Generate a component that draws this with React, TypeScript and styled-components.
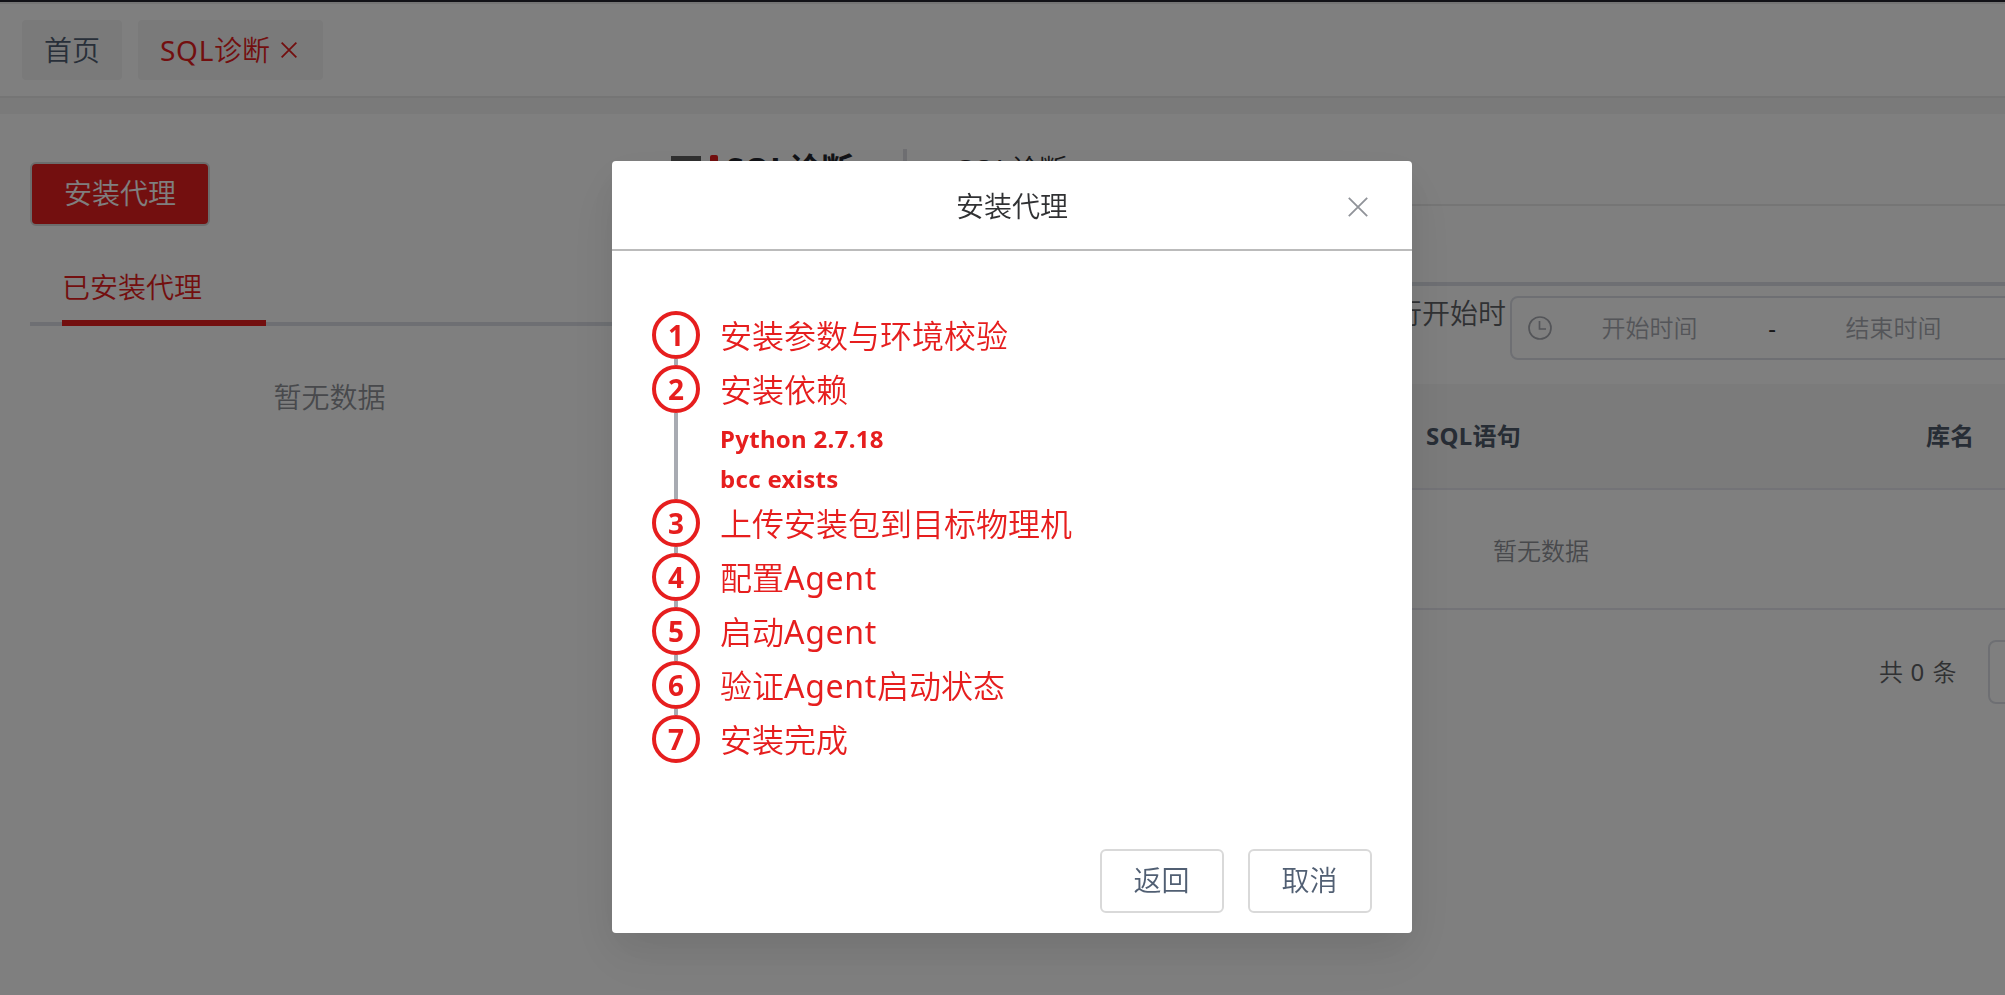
import React from "react";
import styled, { createGlobalStyle, css } from "styled-components";

const red = "#e61e1e";

const GlobalStyle = createGlobalStyle`
  * { box-sizing: border-box; }
  html, body { margin: 0; height: 100%; overflow: hidden; background: #fff; }
  body {
    font-family: "Noto Sans", "Noto Sans CJK SC", sans-serif;
    font-size: 28px;
    line-height: 40px;
    color: #606266;
    font-weight: 350;
  }
  button { font: inherit; }
`;

const Latin = styled.span`
  font-weight: 400;
  letter-spacing: 0.7px;
`;

const Page = styled.div`
  width: 100%;
  height: 995px;
  overflow: hidden;
  display: flex;
  flex-direction: column;
`;

const TopEdge = styled.div`
  height: 4px;
  flex: none;
  background: #ebebeb;
  border-top: 2px solid #24242e;
`;

const TabBar = styled.nav`
  height: 94px;
  flex: none;
  display: flex;
  gap: 16px;
  padding: 16px 22px;
  border-bottom: 2px solid #ebebeb;
`;

const PageTab = styled.div<{ $active?: boolean }>`
  height: 60px;
  display: flex;
  align-items: center;
  gap: 12px;
  padding: 0 23px 0 22px;
  border-radius: 4px;
  background: #f4f4f4;
  color: ${(p) => (p.$active ? red : "#515f73")};
  white-space: nowrap;
  ${(p) => p.$active && css`width: 185px;`}
`;

const TabLabel = styled.span<{ $width: number }>`
  width: ${(p) => p.$width}px;
`;

const Gap = styled.div`
  height: 16px;
  flex: none;
  background: #f4f4f4;
`;

const Main = styled.main`
  flex: 1;
  display: flex;
  min-height: 0;
`;

const AgentPanel = styled.aside`
  width: 600px;
  flex: none;
  margin-left: 30px;
  padding-top: 48px;
`;

const PrimaryButton = styled.button`
  display: block;
  width: 180px;
  height: 64px;
  padding: 0 0 2px 0;
  border: 2px solid #d8d8d8;
  border-radius: 6px;
  background: ${red};
  color: #fff;
`;

const PanelTabs = styled.div`
  height: 82px;
  margin-top: 18px;
  padding: 22px 32px 0;
  border-bottom: 4px solid #dcdfe6;
`;

const PanelTab = styled.div`
  position: relative;
  width: 204px;
  height: 60px;
  color: ${red};
  line-height: 42px;
  &::after {
    content: "";
    position: absolute;
    left: 0;
    right: 0;
    bottom: 0;
    height: 6px;
    background: ${red};
  }
`;

const PanelEmpty = styled.div`
  padding: 51px 1px 0 0;
  text-align: center;
  color: #909399;
`;

const Detail = styled.section`
  width: 1742px;
  flex: none;
  margin-left: 40px;
`;

const DetailHeader = styled.header`
  height: 92px;
  display: flex;
  align-items: center;
  padding-top: 20px;
  border-bottom: 2px solid #ebebeb;
`;

const MenuIcon = styled.svg`
  width: 30px;
  height: 26px;
  margin: 0 9px 0 1px;
`;

const Marker = styled.span`
  width: 8px;
  height: 28px;
  border-radius: 2px;
  background: ${red};
`;

const DetailTitle = styled.h1`
  margin: 0 0 0 8px;
  width: 129px;
  font-size: 32px;
  font-weight: 700;
  line-height: 40px;
  letter-spacing: 0.6px;
  color: #23262e;
  white-space: nowrap;
`;

const Divider = styled.span`
  width: 4px;
  height: 44px;
  margin: 4px 50px 0 48px;
  background: #dfdfe4;
`;

const Crumb = styled.span`
  color: #303133;
`;

const DetailRule = styled.div`
  height: 80px;
  border-bottom: 4px solid #dcdfe6;
`;

const FilterRow = styled.div`
  height: 98px;
  display: flex;
  padding-top: 10px;
`;

const FilterLabel = styled.label`
  width: 836px;
  margin-right: 4px;
  line-height: 35px;
  text-align: right;
`;

const DateRange = styled.div`
  width: 560px;
  height: 64px;
  display: flex;
  align-items: center;
  padding: 0 16px;
  border: 2px solid #dcdfe6;
  border-radius: 8px;
  font-size: 24px;
  color: #a8abb2;
`;

const ClockIcon = styled.svg`
  width: 24px;
  height: 24px;
  margin-right: 4px;
`;

const DateField = styled.span`
  width: 188px;
  padding-right: 1px;
  text-align: center;
`;

const Dash = styled.span`
  width: 56px;
  text-align: center;
  font-weight: 400;
  color: #303133;
`;

const TableHead = styled.div`
  height: 106px;
  display: grid;
  grid-template-columns: 736px 500px 1fr;
  align-items: center;
  border-bottom: 2px solid #e6e6ee;
  background: #f7f7f7;
  font-size: 24px;
  font-weight: 700;
  letter-spacing: 0.3px;
  color: #4f5a6b;
`;

const HeadCell = styled.div`
  padding: 0 20px;
`;

const TableEmpty = styled.div`
  height: 120px;
  border-bottom: 2px solid #e6e6ee;
  font-size: 24px;
  line-height: 121px;
  text-align: center;
  color: #909399;
`;

const Pagination = styled.div`
  display: flex;
  align-items: center;
  margin-top: 30px;
  padding-left: 1209px;
  font-size: 24px;
`;

const Total = styled.span`
  width: 109px;
  white-space: nowrap;
  word-spacing: 1.3px;
`;

const PageSize = styled.div`
  width: 256px;
  height: 64px;
  border: 2px solid #dcdfe6;
  border-radius: 8px;
`;

const Overlay = styled.div`
  position: fixed;
  inset: 0;
  display: flex;
  justify-content: center;
  align-items: flex-start;
  padding: 161px 0 0 19px;
  background: rgba(0, 0, 0, 0.5);
`;

const Dialog = styled.div`
  width: 800px;
  height: 772px;
  display: flex;
  flex-direction: column;
  border-radius: 4px;
  background: #fff;
  box-shadow: 0 24px 64px 8px rgba(0, 0, 0, 0.04), 0 16px 40px rgba(0, 0, 0, 0.08);
`;

const DialogHeader = styled.header`
  height: 90px;
  flex: none;
  display: grid;
  grid-template-columns: 1fr auto 1fr;
  align-items: center;
  padding: 0 44px;
  border-bottom: 2px solid #bbb;
  color: #303133;
`;

const DialogTitle = styled.h2`
  grid-column: 2;
  margin: 0;
  padding: 1px 0 0 0;
  font: inherit;
`;

const CloseButton = styled.button`
  justify-self: end;
  display: flex;
  padding: 4px 0 0;
  border: 0;
  background: none;
`;

const Steps = styled.ol`
  flex: 1;
  margin: 0;
  padding: 60px 40px 0;
  list-style: none;
`;

const Step = styled.li<{ $height: number }>`
  height: ${(p) => p.$height}px;
  display: flex;
  gap: 20px;
  color: ${red};
`;

const StepRail = styled.div`
  width: 48px;
  display: flex;
  flex-direction: column;
  align-items: center;
`;

const StepCircle = styled.span`
  width: 48px;
  height: 48px;
  flex: none;
  display: flex;
  align-items: center;
  justify-content: center;
  border: 4px solid ${red};
  border-radius: 50%;
  font-size: 28px;
  font-weight: 700;
`;

const StepLine = styled.span`
  width: 4px;
  flex: 1;
  background: #a8abb2;
`;

const StepTitle = styled.div`
  height: 54px;
  font-size: 32px;
  line-height: 50px;
  white-space: nowrap;
`;

const StepNote = styled.div`
  height: 40px;
  font-size: 24px;
  font-weight: 700;
  line-height: 40px;
  letter-spacing: 0.3px;
`;

const DialogFooter = styled.footer`
  display: flex;
  justify-content: flex-end;
  gap: 24px;
  padding: 0 40px 20px;
`;

const PlainButton = styled.button`
  width: 124px;
  height: 64px;
  padding: 0 1px 2px 0;
  border: 2px solid #d9d9d9;
  border-radius: 6px;
  background: #fff;
  color: #515f73;
`;

const Cross = ({ size, stroke }: { size: number; stroke: string }) => (
  <svg width={size} height={size} viewBox="0 0 20 20" fill="none" stroke={stroke} strokeWidth={size < 20 ? 2.2 : 1.8}>
    <path d="M.8.8l18.4 18.4M19.2.8L.8 19.2" />
  </svg>
);

const steps: { title: React.ReactNode; notes?: string[] }[] = [
  { title: "安装参数与环境校验" },
  { title: "安装依赖", notes: ["Python 2.7.18", "bcc exists"] },
  { title: "上传安装包到目标物理机" },
  { title: <>配置<Latin>Agent</Latin></> },
  { title: <>启动<Latin>Agent</Latin></> },
  { title: <>验证<Latin>Agent</Latin>启动状态</> },
  { title: "安装完成" },
];

export default function App() {
  return (
    <>
      <GlobalStyle />
      <Page>
        <TopEdge />
        <TabBar>
          <PageTab><TabLabel $width={55}>首页</TabLabel></PageTab>
          <PageTab $active>
            <TabLabel $width={109}><Latin>SQL</Latin>诊断</TabLabel>
            <Cross size={16} stroke={red} />
          </PageTab>
        </TabBar>
        <Gap />
        <Main>
          <AgentPanel>
            <PrimaryButton>安装代理</PrimaryButton>
            <PanelTabs><PanelTab>已安装代理</PanelTab></PanelTabs>
            <PanelEmpty>暂无数据</PanelEmpty>
          </AgentPanel>
          <Detail>
            <DetailHeader>
              <MenuIcon viewBox="0 0 30 26" stroke="#606060" strokeWidth="5">
                <path d="M0 2.5h30M0 13h30M0 23.5h30" />
              </MenuIcon>
              <Marker />
              <DetailTitle>SQL诊断</DetailTitle>
              <Divider />
              <Crumb><Latin>SQL</Latin>诊断</Crumb>
            </DetailHeader>
            <DetailRule />
            <FilterRow>
              <FilterLabel>执行开始时</FilterLabel>
              <DateRange>
                <ClockIcon viewBox="0 0 24 24" fill="none" stroke="currentColor" strokeWidth="1.7">
                  <circle cx="12" cy="12" r="11" />
                  <path d="M11.5 5v8H18" />
                </ClockIcon>
                <DateField>开始时间</DateField>
                <Dash>-</Dash>
                <DateField>结束时间</DateField>
              </DateRange>
            </FilterRow>
            <TableHead>
              <HeadCell />
              <HeadCell>SQL语句</HeadCell>
              <HeadCell>库名</HeadCell>
            </TableHead>
            <TableEmpty>暂无数据</TableEmpty>
            <Pagination>
              <Total>共 <Latin>0</Latin> 条</Total>
              <PageSize />
            </Pagination>
          </Detail>
        </Main>
      </Page>
      <Overlay>
        <Dialog role="dialog">
          <DialogHeader>
            <DialogTitle>安装代理</DialogTitle>
            <CloseButton aria-label="关闭"><Cross size={20} stroke="#909399" /></CloseButton>
          </DialogHeader>
          <Steps>
            {steps.map((step, i) => (
              <Step key={i} $height={step.notes ? 134 : 54}>
                <StepRail>
                  <StepCircle>{i + 1}</StepCircle>
                  {i < steps.length - 1 && <StepLine />}
                </StepRail>
                <div>
                  <StepTitle>{step.title}</StepTitle>
                  {step.notes?.map((note) => <StepNote key={note}>{note}</StepNote>)}
                </div>
              </Step>
            ))}
          </Steps>
          <DialogFooter>
            <PlainButton>返回</PlainButton>
            <PlainButton>取消</PlainButton>
          </DialogFooter>
        </Dialog>
      </Overlay>
    </>
  );
}
